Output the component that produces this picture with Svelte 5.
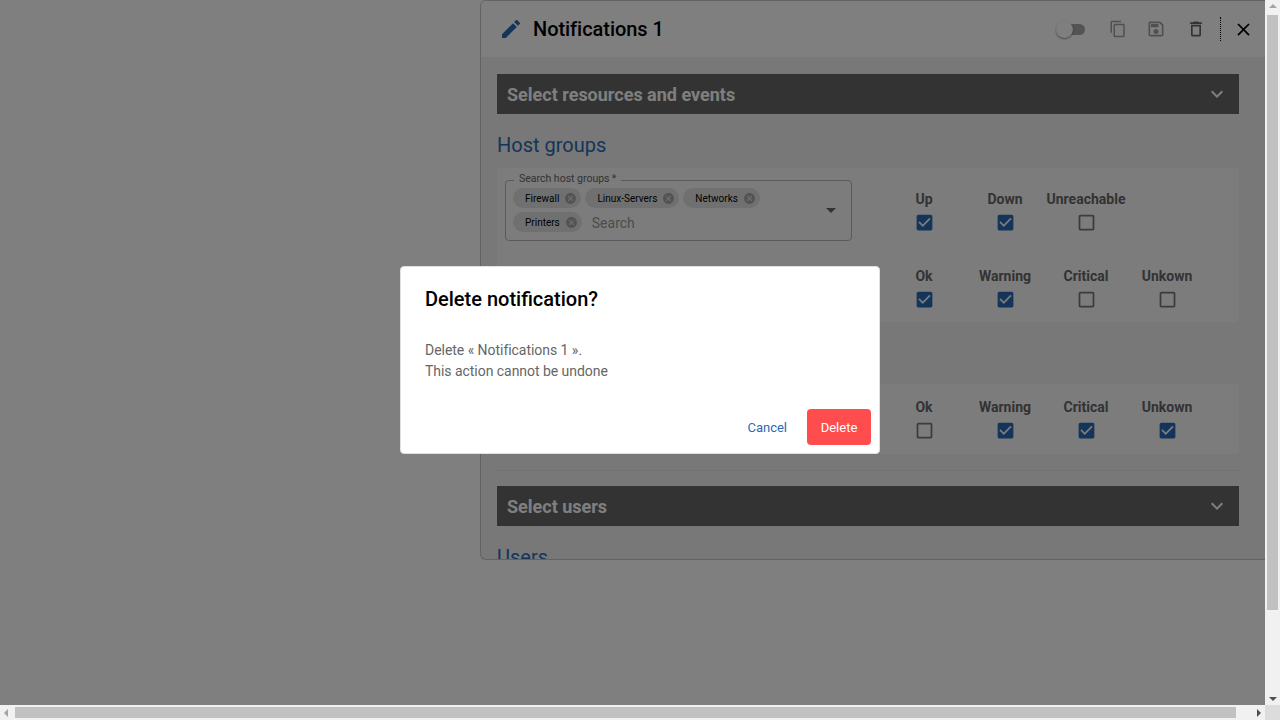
<script>
	const hostStates = ["Up", "Down", "Unreachable"];
	const serviceStates = ["Ok", "Warning", "Critical", "Unkown"];
	const chips = ["Firewall", "Linux-Servers", "Networks", "Printers"];

	const hostRows = [
		{ labels: hostStates, checked: [true, true, false] },
		{ labels: serviceStates, checked: [true, true, false, false] }
	];
	const serviceRow = { labels: serviceStates, checked: [false, true, true, true] };

	const icons = {
		edit: "M3 17.25V21h3.75L17.81 9.94l-3.75-3.75L3 17.25zM20.71 7.04c.39-.39.39-1.02 0-1.41l-2.34-2.34c-.39-.39-1.02-.39-1.41 0l-1.83 1.83 3.75 3.75 1.83-1.83z",
		copy: "M16 1H4c-1.1 0-2 .9-2 2v14h2V3h12V1zm3 4H8c-1.1 0-2 .9-2 2v14c0 1.1.9 2 2 2h11c1.1 0 2-.9 2-2V7c0-1.1-.9-2-2-2zm0 16H8V7h11v14z",
		save: "M17 3H5c-1.11 0-2 .9-2 2v14c0 1.1.89 2 2 2h14c1.1 0 2-.9 2-2V7l-4-4zm2 16H5V5h11.17L19 7.83V19zm-7-7c-1.66 0-3 1.34-3 3s1.34 3 3 3 3-1.34 3-3-1.34-3-3-3zM6 6h9v4H6z",
		trash: "M6 19c0 1.1.9 2 2 2h8c1.1 0 2-.9 2-2V7H6v12zM8 9h8v10H8V9zm7.5-5l-1-1h-5l-1 1H5v2h14V4z",
		close: "M19 6.41L17.59 5 12 10.59 6.41 5 5 6.41 10.59 12 5 17.59 6.41 19 12 13.41 17.59 19 19 17.59 13.41 12z",
		more: "M16.59 8.59L12 13.17 7.41 8.59 6 10l6 6 6-6z",
		cancel: "M12 2C6.47 2 2 6.47 2 12s4.47 10 10 10 10-4.47 10-10S17.53 2 12 2zm5 13.59L15.59 17 12 13.41 8.41 17 7 15.59 10.59 12 7 8.41 8.41 7 12 10.59 15.59 7 17 8.41 13.41 12 17 15.59z",
		on: "M19 3H5c-1.11 0-2 .9-2 2v14c0 1.1.89 2 2 2h14c1.11 0 2-.9 2-2V5c0-1.1-.89-2-2-2zm-9 14l-5-5 1.41-1.41L10 14.17l7.59-7.59L19 8l-9 9z",
		off: "M19 5v14H5V5h14m0-2H5c-1.1 0-2 .9-2 2v14c0 1.1.9 2 2 2h14c1.1 0 2-.9 2-2V5c0-1.1-.9-2-2-2z"
	};
</script>

{#snippet icon(name, size, cls)}
	<svg class={cls} width={size} height={size} viewBox="0 0 24 24" aria-hidden="true">
		<path d={icons[name]} />
	</svg>
{/snippet}

{#snippet accordion(title)}
	<div class="bar">
		<span>{title}</span>
		{@render icon("more", 24, "chevron")}
	</div>
{/snippet}

{#snippet row(data, withField)}
	<div class="row">
		{#if withField}
			<div class="field">
				<span class="legend">Search host groups&#8201;*</span>
				<div class="chips">
					{#each chips as chip}
						<span class="chip">{chip}{@render icon("cancel", 13, "chip-x")}</span>
					{/each}
					<span class="placeholder">Search</span>
				</div>
				<i class="caret"></i>
			</div>
		{:else}
			<div></div>
		{/if}
		<div></div>
		{#each data.labels as label, i}
			<div class="state">
				<span>{label}</span>
				{#if data.checked[i]}
					{@render icon("on", 21, "check on")}
				{:else}
					{@render icon("off", 21, "check")}
				{/if}
			</div>
		{/each}
	</div>
{/snippet}

<div class="window">
	<div class="viewport">
		<div class="page">
			<section class="panel">
				<header class="head">
					{@render icon("edit", 24, "pencil")}
					<h1>Notifications 1</h1>
					<div class="toggle"><i></i></div>
					{@render icon("copy", 18, "tool copy")}
					{@render icon("save", 20, "tool save")}
					{@render icon("trash", 20, "tool trash")}
					<span class="sep"></span>
					{@render icon("close", 21, "closer")}
				</header>
				<div class="body">
					{@render accordion("Select resources and events")}
					<h2>Host groups</h2>
					<div class="card first">
						{@render row(hostRows[0], true)}
						{@render row(hostRows[1], false)}
					</div>
					<div class="card second">
						{@render row(serviceRow, false)}
					</div>
					<hr />
					{@render accordion("Select users")}
					<h2>Users</h2>
				</div>
			</section>
		</div>
		<div class="backdrop"></div>
	</div>

	<div class="vbar">
		<i class="arrow up faint"></i>
		<div class="vthumb"></div>
		<i class="arrow down"></i>
	</div>
	<div class="hbar">
		<i class="arrow left faint"></i>
		<div class="hthumb"></div>
		<i class="arrow right"></i>
	</div>
	<div class="corner"></div>

	<div class="modal-layer">
		<div class="modal">
			<h3>Delete notification?</h3>
			<p>Delete « Notifications 1 ».<br />This action cannot be undone</p>
			<div class="actions">
				<button class="cancel">Cancel</button>
				<button class="delete">Delete</button>
			</div>
		</div>
	</div>
</div>

<style>
	:global(body) {
		margin: 0;
		overflow: hidden;
		font-family: Roboto, "Liberation Sans", sans-serif;
	}

	.window {
		display: grid;
		grid-template-columns: 1265px 15px;
		grid-template-rows: 705px 15px;
		width: 1280px;
		height: 720px;
		position: relative;
		overflow: hidden;
	}

	.viewport {
		position: relative;
		background: #fff;
		overflow: hidden;
	}

	.page {
		display: flex;
		justify-content: flex-end;
	}

	.backdrop {
		position: absolute;
		inset: 0;
		background: rgba(0, 0, 0, 0.5);
	}

	.panel {
		box-sizing: border-box;
		width: 785px;
		height: 560px;
		border: 1px solid #c4c4c4;
		border-right: 0;
		border-radius: 6px 0 0 6px;
		background: #f0f0f0;
		overflow: hidden;
		display: flex;
		flex-direction: column;
	}

	.head {
		flex: none;
		box-sizing: border-box;
		height: 56px;
		background: #fff;
		display: flex;
		align-items: center;
		padding: 0 11.5px 0 18px;
	}

	.head svg {
		flex: none;
		fill: currentColor;
	}

	.pencil {
		color: #2b69b5;
	}

	h1 {
		margin: 0 0 0 10px;
		font-size: 20px;
		font-weight: 500;
		letter-spacing: -0.05px;
		color: #000;
		flex: 1;
	}

	.toggle {
		position: relative;
		width: 23px;
		height: 11px;
		margin-right: 24px;
		border-radius: 6px;
		background: #a9a9a9;
	}

	.toggle i {
		position: absolute;
		left: -6px;
		top: -3px;
		width: 17px;
		height: 17px;
		border-radius: 50%;
		background: #fff;
		box-shadow: 0 1px 2px rgba(0, 0, 0, 0.45);
	}

	.tool {
		color: #a0a0a0;
	}

	.copy {
		margin-right: 19px;
	}

	.save {
		margin-right: 20px;
	}

	.trash {
		color: #666;
		margin-right: 14px;
	}

	.sep {
		height: 24px;
		border-left: 1px dotted #000;
		margin-right: 11.5px;
	}

	.closer {
		color: #000;
	}

	.body {
		flex: 1;
		min-height: 0;
		overflow: hidden;
		padding: 17px 26px 0 16px;
	}

	.bar {
		display: flex;
		align-items: center;
		justify-content: space-between;
		height: 40px;
		padding: 0 10px;
		background: #666;
		color: #fff;
		font-size: 18px;
		font-weight: 700;
	}

	.bar :global(.chevron) {
		fill: #fff;
	}

	h2 {
		margin: 19px 0 11px;
		font-size: 20px;
		font-weight: 400;
		line-height: 24px;
		color: #2b69b5;
	}

	.card {
		background: #f8f8f8;
		border-radius: 4px;
		display: flex;
		flex-direction: column;
		gap: 16px;
	}

	.first {
		padding: 12px 8px 4px;
		margin-bottom: 62px;
	}

	.second {
		padding: 4px 8px 5px;
	}

	.row {
		display: grid;
		grid-template-columns: 347px 31.5px repeat(4, 81px);
		height: 61px;
	}

	.field {
		position: relative;
		box-sizing: border-box;
		border: 1px solid #b4b4b4;
		border-radius: 4px;
		padding: 7px 40px 0 7px;
	}

	.legend {
		position: absolute;
		left: 8px;
		top: -9px;
		padding: 0 5px;
		background: #f8f8f8;
		font-size: 10.5px;
		line-height: 13px;
		color: #666;
	}

	.chips {
		display: flex;
		flex-wrap: wrap;
		align-items: center;
		gap: 4px;
	}

	.chip {
		display: flex;
		align-items: center;
		justify-content: space-between;
		height: 20px;
		padding: 0 4px 0 12px;
		gap: 5px;
		border-radius: 10px;
		background: #e0e0e0;
		font-size: 10px;
		color: #000;
	}

	.chip :global(.chip-x) {
		fill: #a6a6a6;
	}

	.placeholder {
		position: relative;
		top: 1px;
		margin-left: 6px;
		font-size: 14px;
		line-height: 20px;
		color: #999;
	}

	.caret {
		position: absolute;
		right: 15px;
		top: 27px;
		border: 5px solid transparent;
		border-top-color: #666;
		border-bottom: 0;
	}

	.state {
		display: flex;
		flex-direction: column;
		align-items: center;
		padding-top: 11px;
		gap: 5px;
		font-size: 14px;
		line-height: 16px;
		font-weight: 700;
		color: #666;
	}

	.state :global(.check) {
		fill: #777;
	}

	.state :global(.check.on) {
		fill: #2b69b5;
	}

	hr {
		margin: 16px 0 15px;
		border: 0;
		border-top: 1px solid #e4e4e4;
	}

	.vbar {
		grid-column: 2;
		grid-row: 1;
		background: #f1f1f1;
		position: relative;
	}

	.vthumb {
		position: absolute;
		left: 2px;
		top: 15px;
		width: 11px;
		height: 595px;
		background: #c1c1c1;
	}

	.hbar {
		grid-column: 1;
		grid-row: 2;
		background: #f1f1f1;
		position: relative;
	}

	.hthumb {
		position: absolute;
		left: 15px;
		top: 2px;
		width: 1221px;
		height: 11px;
		background: #c1c1c1;
	}

	.corner {
		grid-column: 2;
		grid-row: 2;
		background: #dcdcdc;
	}

	.arrow {
		position: absolute;
		width: 0;
		height: 0;
		border: 4px solid transparent;
	}

	.up {
		left: 4px;
		top: 4px;
		border-top: 0;
		border-bottom-color: #505050;
	}

	.down {
		left: 4px;
		bottom: 4px;
		border-bottom: 0;
		border-top-color: #505050;
	}

	.left {
		left: 4px;
		top: 4px;
		border-left: 0;
		border-right-color: #505050;
	}

	.right {
		right: 4px;
		top: 4px;
		border-right: 0;
		border-left-color: #505050;
	}

	.up.faint {
		border-bottom-color: #a3a3a3;
	}

	.left.faint {
		border-right-color: #a3a3a3;
	}

	.modal-layer {
		position: absolute;
		inset: 0;
		display: flex;
		align-items: center;
		justify-content: center;
	}

	.modal {
		box-sizing: border-box;
		width: 480px;
		height: 188px;
		padding: 20px 8px 8px 24px;
		border: 1px solid #e0e0e0;
		border-radius: 4px;
		background: #fff;
		display: flex;
		flex-direction: column;
	}

	h3 {
		margin: 0;
		font-size: 20px;
		font-weight: 500;
		line-height: 24px;
		color: #000;
	}

	p {
		margin: 29px 0 0;
		font-size: 14px;
		line-height: 21px;
		letter-spacing: -0.04px;
		color: #666;
	}

	.actions {
		margin-top: auto;
		display: flex;
		justify-content: flex-end;
		align-items: center;
		gap: 20px;
	}

	button {
		border: 0;
		font-family: inherit;
		font-size: 13px;
		font-weight: 400;
		height: 36px;
		background: none;
		padding: 0;
	}

	.cancel {
		color: #2b69b5;
	}

	.delete {
		width: 64px;
		border-radius: 4px;
		background: #ff4d4d;
		color: #fff;
	}
</style>
